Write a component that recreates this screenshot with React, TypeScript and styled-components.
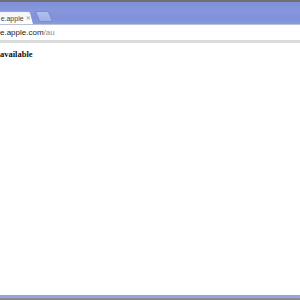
import styled, { createGlobalStyle } from "styled-components";

const GlobalStyle = createGlobalStyle`
  html, body {
    margin: 0;
    padding: 0;
    background: #ffffff;
    overflow: hidden;
  }
`;

const Window = styled.div`
  width: 300px;
  height: 300px;
  display: flex;
  flex-direction: column;
  background: #ffffff;
  border-top: 2px solid #6f6f73;
  border-bottom: 2px solid #8a8a90;
  box-sizing: border-box;
  overflow: hidden;
`;

const TitleBar = styled.div`
  height: 22px;
  flex-shrink: 0;
  display: flex;
  align-items: flex-end;
  background: linear-gradient(
    to bottom,
    #7f90d6 0%,
    #8797dd 40%,
    #7f91d9 75%,
    #8a9ade 100%
  );
  border-bottom: 1px solid #b9c0d8;
`;

const Tab = styled.div`
  width: 34px;
  height: 13px;
  flex-shrink: 0;
  display: flex;
  align-items: center;
  gap: 2px;
  padding-left: 2px;
  box-sizing: border-box;
  background: linear-gradient(to bottom, #f3f4f8, #ffffff);
  border-right: 1px solid #8f99c0;
  border-top: 1px solid #9aa3c4;
  border-radius: 0 3px 0 0;
  transform: skewX(14deg);
  transform-origin: bottom left;
`;

const TabLabel = styled.span`
  display: inline-block;
  transform: skewX(-14deg);
  font-family: "Liberation Sans", Arial, sans-serif;
  font-size: 7px;
  color: #444;
  white-space: nowrap;
`;

const TabClose = styled.span`
  display: inline-block;
  transform: skewX(-14deg);
  font-family: "DejaVu Sans", sans-serif;
  font-size: 6.5px;
  color: #888;
`;

const NewTab = styled.div`
  width: 12px;
  height: 9px;
  margin: 0 0 2px 3px;
  background: linear-gradient(to bottom, #b3bfee, #9fb0e8);
  border: 1px solid #7c8ccc;
  border-radius: 1px 2px 1px 1px;
  transform: skewX(22deg);
`;

const Toolbar = styled.div`
  height: 15px;
  flex-shrink: 0;
  display: flex;
  align-items: center;
  background: #ffffff;
  border-bottom: 3px solid #dcdcdc;
`;

const Url = styled.span`
  font-family: "Liberation Sans", Arial, sans-serif;
  font-size: 8px;
  color: #222;
  white-space: nowrap;
`;

const UrlPath = styled.span`
  color: #8a8a8a;
`;

const Content = styled.div`
  flex: 1;
  padding-top: 6px;
`;

const Heading = styled.h1`
  margin: 0;
  font-family: "Liberation Serif", "Times New Roman", serif;
  font-weight: bold;
  font-size: 8.5px;
  color: #111;
`;

const BottomEdge = styled.div`
  height: 3px;
  flex-shrink: 0;
  background: linear-gradient(to bottom, #8f9fdf, #9aaae6);
`;

export default function App() {
  return (
    <>
      <GlobalStyle />
      <Window>
        <TitleBar>
          <Tab>
            <TabLabel>e.apple</TabLabel>
            <TabClose>×</TabClose>
          </Tab>
          <NewTab />
        </TitleBar>
        <Toolbar>
          <Url>
            e.apple.com<UrlPath>/au</UrlPath>
          </Url>
        </Toolbar>
        <Content>
          <Heading>available</Heading>
        </Content>
        <BottomEdge />
      </Window>
    </>
  );
}
